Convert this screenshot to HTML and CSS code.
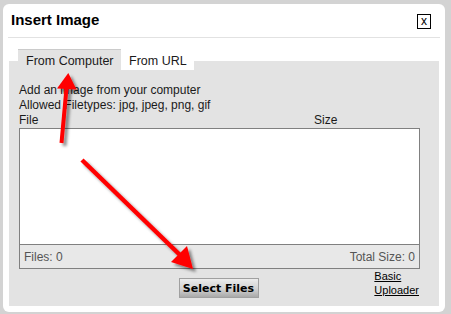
FILE: index.html
```html
<!DOCTYPE html>
<html lang="en">
<head>
    <meta charset="UTF-8">
    <title>Insert Image</title>
    <link rel="stylesheet" href="styles.css">
</head>
<body>
<div class="dialog">
    <!-- Header -->
    <div class="dialog__head">
        <h2 class="dialog__title">Insert Image</h2>
        <span class="dialog__close">x</span>
    </div>

    <!-- Tabs -->
    <div class="tabs">
        <span class="tab tab--active">From Computer</span>
        <span class="tab">From URL</span>
    </div>

    <div class="panel">
        <p class="panel__line">Add an image from your computer</p>
        <p class="panel__line">Allowed Filetypes: jpg, jpeg, png, gif</p>
        <div class="list__head panel__line">
            <span>File</span>
            <span>Size</span>
        </div>
        <div class="list">
            <div class="list__body"></div>
            <div class="list__foot">
                <span>Files: 0</span>
                <span>Total Size: 0</span>
            </div>
        </div>
        <div class="actions">
            <span></span>
            <button class="btn" type="button">Select Files</button>
            <a href="#" class="link">Basic<br>Uploader</a>
        </div>
    </div>
</div>

<!-- Annotation arrows -->
<svg class="arrows" width="451" height="314" viewBox="0 0 451 314">
    <defs>
        <filter id="shadow" x="-50%" y="-50%" width="200%" height="200%">
            <feDropShadow dx="3" dy="3" stdDeviation="1.6" flood-color="#000" flood-opacity="0.45"/>
        </filter>
    </defs>
    <g filter="url(#shadow)" fill="#f00" stroke="#f00">
        <line x1="61.5" y1="143" x2="66.5" y2="88" stroke-width="4"/>
        <polygon points="68.3,73 57,88.5 76.5,89.5" stroke="none"/>
        <line x1="82" y1="160" x2="180" y2="255" stroke-width="4.5"/>
        <polygon points="193,269 171,262 187,246" stroke="none"/>
    </g>
</svg>
</body>
</html>
```

FILE: styles.css
```css
:root {
    --page: #d3d3d3;
    --panel: #e3e3e3;
    --line: #808080;
    --text: #1a1a1a;

    font-family: "Liberation Sans", Arial, sans-serif;
}

body {
    background-color: var(--page);
    margin: 0;
    position: relative;
}

.dialog {
    background-color: #fff;
    border-radius: 6px;
    margin: 4px 6px 3px 3px;
    padding: 0 6px 6px;
}

.dialog__head {
    align-items: center;
    border-bottom: 1px solid #e2e2e2;
    display: flex;
    height: 33px;
    justify-content: space-between;
    margin: 0 -1px;
    padding: 0 9px 0 3px;
}

.dialog__title {
    color: #000;
    font-size: 15px;
    font-weight: bold;
    margin: 0;
    position: relative;
    top: -1px;
}

.dialog__close {
    border: 1px solid #000;
    box-sizing: border-box;
    color: #000;
    font-size: 12px;
    height: 15px;
    line-height: 12px;
    position: relative;
    text-align: center;
    top: 1px;
    width: 14px;
}

.tabs {
    display: flex;
    margin: 11px 0 -9px 9px;
    position: relative;
}

.tab {
    background-color: #fff;
    box-sizing: border-box;
    color: var(--text);
    font-size: 12.5px;
    height: 21px;
    line-height: 15px;
    padding: 5px 0 0 8px;
    width: 73px;
}

.tab--active {
    background-color: var(--panel);
    border-top: 1px solid #cbcbcb;
    padding-top: 4px;
    width: 103px;
}

.panel {
    background-color: var(--panel);
    padding: 22px 19px 8px 10px;
}

.panel__line {
    color: var(--text);
    font-size: 12px;
    line-height: 15px;
    margin: 0;
}

.list__head {
    display: grid;
    grid-template-columns: 1fr 106px;
}

.list {
    border: 1px solid var(--line);
}

.list__body {
    background-color: #fff;
    height: 115px;
}

.list__foot {
    background-color: #e8e8e8;
    border-top: 1px solid var(--line);
    color: #555;
    display: flex;
    font-size: 12px;
    height: 23px;
    justify-content: space-between;
    line-height: 25px;
    padding: 0 4px;
}

.actions {
    align-items: start;
    display: grid;
    grid-template-columns: 1fr auto 1fr;
}

.btn {
    background-image: linear-gradient(#ececec 0%, #d2d2d2 55%, #a9a9a9 100%);
    border: 1px solid #a0a0a0;
    color: #000;
    font-family: "DejaVu Sans", Verdana, sans-serif;
    font-size: 11px;
    font-weight: bold;
    height: 20px;
    margin: 9px 2px 0 0;
    padding: 0;
    width: 80px;
}

.link {
    color: #000;
    font-size: 11px;
    justify-self: end;
    line-height: 14px;
    margin-right: 1px;
    text-decoration: underline;
}

.arrows {
    left: 0;
    pointer-events: none;
    position: absolute;
    top: 0;
}
```
